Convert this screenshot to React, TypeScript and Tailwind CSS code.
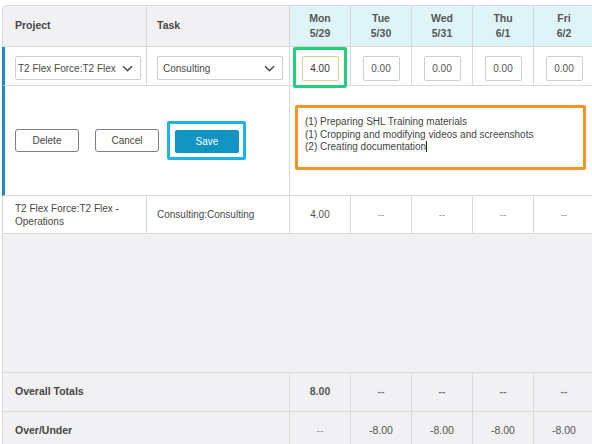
import React from 'react';

const days = [
  { name: 'Mon', date: '5/29', value: '4.00', row: '4.00', total: '8.00', over: '--' },
  { name: 'Tue', date: '5/30', value: '0.00', row: '--', total: '--', over: '-8.00' },
  { name: 'Wed', date: '5/31', value: '0.00', row: '--', total: '--', over: '-8.00' },
  { name: 'Thu', date: '6/1', value: '0.00', row: '--', total: '--', over: '-8.00' },
  { name: 'Fri', date: '6/2', value: '0.00', row: '--', total: '--', over: '-8.00' },
];

const line = 'border-r border-b border-[#d9d9d9]';

const Chevron = () => (
  <svg width="11" height="7" viewBox="0 0 11 7" className="shrink-0">
    <path d="M1 1.2 L5.5 5.6 L10 1.2" fill="none" stroke="#555" strokeWidth="1.6" />
  </svg>
);

const Select: React.FC<{ text: string; pad: string }> = ({ text, pad }) => (
  <div className={`flex items-center w-[126px] h-[24px] bg-white border border-[#cfcfcf] rounded-[2px] pr-[7px] ${pad}`}>
    <span className="flex-1 min-w-0 mr-[6px] overflow-hidden whitespace-nowrap text-[10px] text-[#4a4a4a]">{text}</span>
    <Chevron />
  </div>
);

const App: React.FC = () => {
  return (
    <div className="w-[592px] h-[444px] overflow-hidden bg-white pt-[5px] pl-[2px] font-['Liberation_Sans',Arial,sans-serif] text-[#474747]">
      <div className="grid w-[592px] grid-cols-[145px_143px_61px_61px_61px_61px_61px]">
        {/* header */}
        <div className={`h-[42px] flex items-center pl-[12px] border-t border-l rounded-tl-[4px] bg-[#f1f1f3] text-[10.5px] font-bold ${line}`}>
          Project
        </div>
        <div className={`h-[42px] flex items-center pl-[10px] border-t bg-[#f1f1f3] text-[10.5px] font-bold ${line}`}>
          Task
        </div>
        {days.map((d) => (
          <div
            key={d.name}
            className={`h-[42px] flex flex-col items-center justify-center border-t bg-[#def4f8] text-[10.5px] font-bold leading-[15px] text-[#575757] ${line}`}
          >
            <span>{d.name}</span>
            <span>{d.date}</span>
          </div>
        ))}

        {/* edit row: selects and hours */}
        <div className={`h-[39px] pt-[9px] pl-[10px] border-l-[3px] border-l-[#1b8cb9] ${line}`}>
          <Select text="T2 Flex Force:T2 Flex" pad="pl-[2px]" />
        </div>
        <div className={`h-[39px] pt-[9px] pl-[10px] ${line}`}>
          <Select text="Consulting" pad="pl-[5px]" />
        </div>
        {days.map((d, i) => (
          <div key={d.name} className={`relative h-[39px] flex justify-center pt-[9px] ${line}`}>
            <div
              className={`w-[37px] h-[25px] flex items-center justify-center bg-white rounded-[2px] border text-[10px] ${
                i === 0 ? 'border-[#e3cf8c] text-[#333]' : 'border-[#cfcfcf] text-[#555]'
              }`}
            >
              {d.value}
            </div>
            {i === 0 && (
              <div className="absolute left-[3px] top-0 w-[54px] h-[41px] border-[3px] border-[#22d07b] rounded-[2px] z-10" />
            )}
          </div>
        ))}

        {/* edit row: buttons and notes */}
        <div className={`col-span-2 h-[110px] flex items-center gap-[16px] pl-[10px] border-l-[3px] border-l-[#1b8cb9] ${line}`}>
          <button className="w-[64px] h-[23px] bg-white border border-[#808080] rounded-[3px] text-[10px] text-[#444]">
            Delete
          </button>
          <button className="w-[64px] h-[23px] bg-white border border-[#808080] rounded-[3px] text-[10px] text-[#444]">
            Cancel
          </button>
          <div className="relative">
            <button className="w-[64px] h-[23px] bg-[#1193c3] rounded-[2px] text-[10px] text-white">Save</button>
            <div className="absolute -left-[8px] -right-[7px] -top-[7px] -bottom-[7px] border-[3px] border-[#1eb3e8] rounded-[2px]" />
          </div>
        </div>
        <div className={`col-span-5 h-[110px] pt-[19px] pl-[5px] ${line}`}>
          <div className="w-[291px] h-[65px] bg-white border-[3px] border-[#f7931e] rounded-[2px] pt-[8px] pl-[7px] text-[10px] leading-[12.5px] text-[#444]">
            <div>(1) Preparing SHL Training materials</div>
            <div>(1) Cropping and modifying videos and screenshots</div>
            <div>
              (2) Creating documentation
              <span className="inline-block w-px h-[11px] bg-[#222] align-[-2px]" />
            </div>
          </div>
        </div>

        {/* saved row */}
        <div className={`h-[38px] flex items-center pl-[12px] border-l text-[10px] leading-[13px] ${line}`}>
          T2 Flex Force:T2 Flex -<br />
          Operations
        </div>
        <div className={`h-[38px] flex items-center pl-[10px] text-[10px] ${line}`}>Consulting:Consulting</div>
        {days.map((d) => (
          <div
            key={d.name}
            className={`h-[38px] flex items-center justify-center text-[10px] ${
              d.row === '--' ? 'text-[#a0a0a0]' : 'text-[#555]'
            } ${line}`}
          >
            {d.row}
          </div>
        ))}

        {/* empty area */}
        <div className={`col-span-7 h-[139px] bg-[#f1f1f3] border-l ${line}`} />

        {/* totals */}
        <div className={`col-span-2 h-[39px] flex items-center pl-[12px] bg-[#f1f1f3] border-l text-[10.5px] font-bold ${line}`}>
          Overall Totals
        </div>
        {days.map((d) => (
          <div
            key={d.name}
            className={`h-[39px] flex items-center justify-center bg-[#f1f1f3] text-[10.5px] font-bold ${
              d.total === '--' ? 'text-[#777]' : 'text-[#555]'
            } ${line}`}
          >
            {d.total}
          </div>
        ))}

        <div className={`col-span-2 h-[39px] flex items-center pl-[12px] bg-[#f1f1f3] border-l text-[10.5px] font-bold ${line}`}>
          Over/Under
        </div>
        {days.map((d) => (
          <div
            key={d.name}
            className={`h-[39px] flex items-center justify-center bg-[#f1f1f3] text-[10.5px] ${
              d.over === '--' ? 'text-[#9a9a9a]' : 'text-[#555]'
            } ${line}`}
          >
            {d.over}
          </div>
        ))}
      </div>
    </div>
  );
};

export default App;
